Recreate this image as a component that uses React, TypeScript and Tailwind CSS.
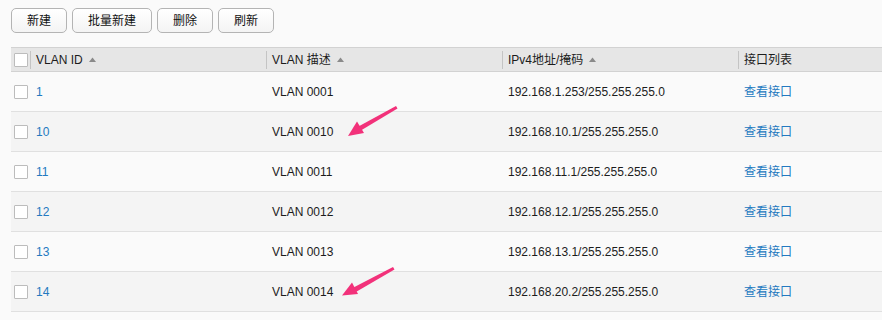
import React from 'react';

const rows = [
  { id: '1', desc: 'VLAN 0001', ip: '192.168.1.253/255.255.255.0' },
  { id: '10', desc: 'VLAN 0010', ip: '192.168.10.1/255.255.255.0' },
  { id: '11', desc: 'VLAN 0011', ip: '192.168.11.1/255.255.255.0' },
  { id: '12', desc: 'VLAN 0012', ip: '192.168.12.1/255.255.255.0' },
  { id: '13', desc: 'VLAN 0013', ip: '192.168.13.1/255.255.255.0' },
  { id: '14', desc: 'VLAN 0014', ip: '192.168.20.2/255.255.255.0' },
];

function Checkbox() {
  return <span className="block w-[14px] h-[14px] bg-white border border-[#bcbcbc] rounded-[1px] shrink-0" />;
}

function SortArrow() {
  return (
    <svg width="7" height="5" viewBox="0 0 7 5" className="ml-[6px]">
      <path d="M0 5 L3.5 0.5 L7 5 Z" fill="#8a8a8a" />
    </svg>
  );
}

function Btn({ label, w }: { label: string; w: string }) {
  return (
    <button
      className={`${w} h-[25px] rounded-[5px] border border-[#b4b4b4] bg-gradient-to-b from-white to-[#f4f4f4] text-[12px] text-[#111] flex items-center justify-center`}
    >
      {label}
    </button>
  );
}

export default function App() {
  return (
    <div
      className="relative w-[882px] h-[320px] overflow-hidden bg-[#fafafa] text-[12px] text-[#1c1c1c]"
      style={{ fontFamily: '"Liberation Sans", Arial, "Noto Sans CJK SC", sans-serif' }}
    >
      {/* toolbar */}
      <div className="flex items-center gap-[5px] pl-[11px] pt-[8px]">
        <Btn label="新建" w="w-[56px]" />
        <Btn label="批量新建" w="w-[80px]" />
        <Btn label="删除" w="w-[56px]" />
        <Btn label="刷新" w="w-[56px]" />
      </div>

      {/* table */}
      <div className="ml-[11px] mt-[14px]">
        {/* header */}
        <div className="flex h-[25px] items-center bg-[#e6e6e6] border-t border-b border-[#d2d2d2]">
          <div className="w-[255px] flex items-center pl-[3px]">
            <Checkbox />
            <span className="w-px h-[18px] bg-[#c4c4c4] ml-[2px]" />
            <span className="ml-[5px]">VLAN ID</span>
            <SortArrow />
          </div>
          <div className="w-[236px] flex items-center">
            <span className="w-px h-[18px] bg-[#c4c4c4]" />
            <span className="ml-[5px]">VLAN 描述</span>
            <SortArrow />
          </div>
          <div className="w-[236px] flex items-center">
            <span className="w-px h-[18px] bg-[#c4c4c4]" />
            <span className="ml-[5px]">IPv4地址/掩码</span>
            <SortArrow />
          </div>
          <div className="flex-1 flex items-center">
            <span className="w-px h-[18px] bg-[#c4c4c4]" />
            <span className="ml-[5px]">接口列表</span>
          </div>
        </div>

        {/* rows */}
        {rows.map((r, i) => (
          <div
            key={r.id}
            className={`flex h-[40px] items-center border-b border-[#e0e0e0] ${i % 2 === 1 ? 'bg-[#f4f4f4]' : 'bg-[#fafafa]'}`}
          >
            <div className="w-[255px] flex items-center pl-[3px]">
              <Checkbox />
              <span className="ml-[8px] text-[#2379c0]">{r.id}</span>
            </div>
            <div className="w-[236px] pl-[6px]">{r.desc}</div>
            <div className="w-[236px] pl-[6px]">{r.ip}</div>
            <div className="flex-1 pl-[6px] text-[#2379c0]">查看接口</div>
          </div>
        ))}
      </div>

      {/* annotation arrows */}
      <svg className="absolute inset-0 pointer-events-none" width="882" height="320">
        <polygon points="396,106 397.5,108.5 360,131 357.5,127" fill="#f2317a" />
        <polygon points="348,136 364,133 357,121.5" fill="#f2317a" />
        <polygon points="393,267 394.5,269.5 355,292.5 352.5,288" fill="#f2317a" />
        <polygon points="342,295.5 358,294 352,282.5" fill="#f2317a" />
      </svg>
    </div>
  );
}
